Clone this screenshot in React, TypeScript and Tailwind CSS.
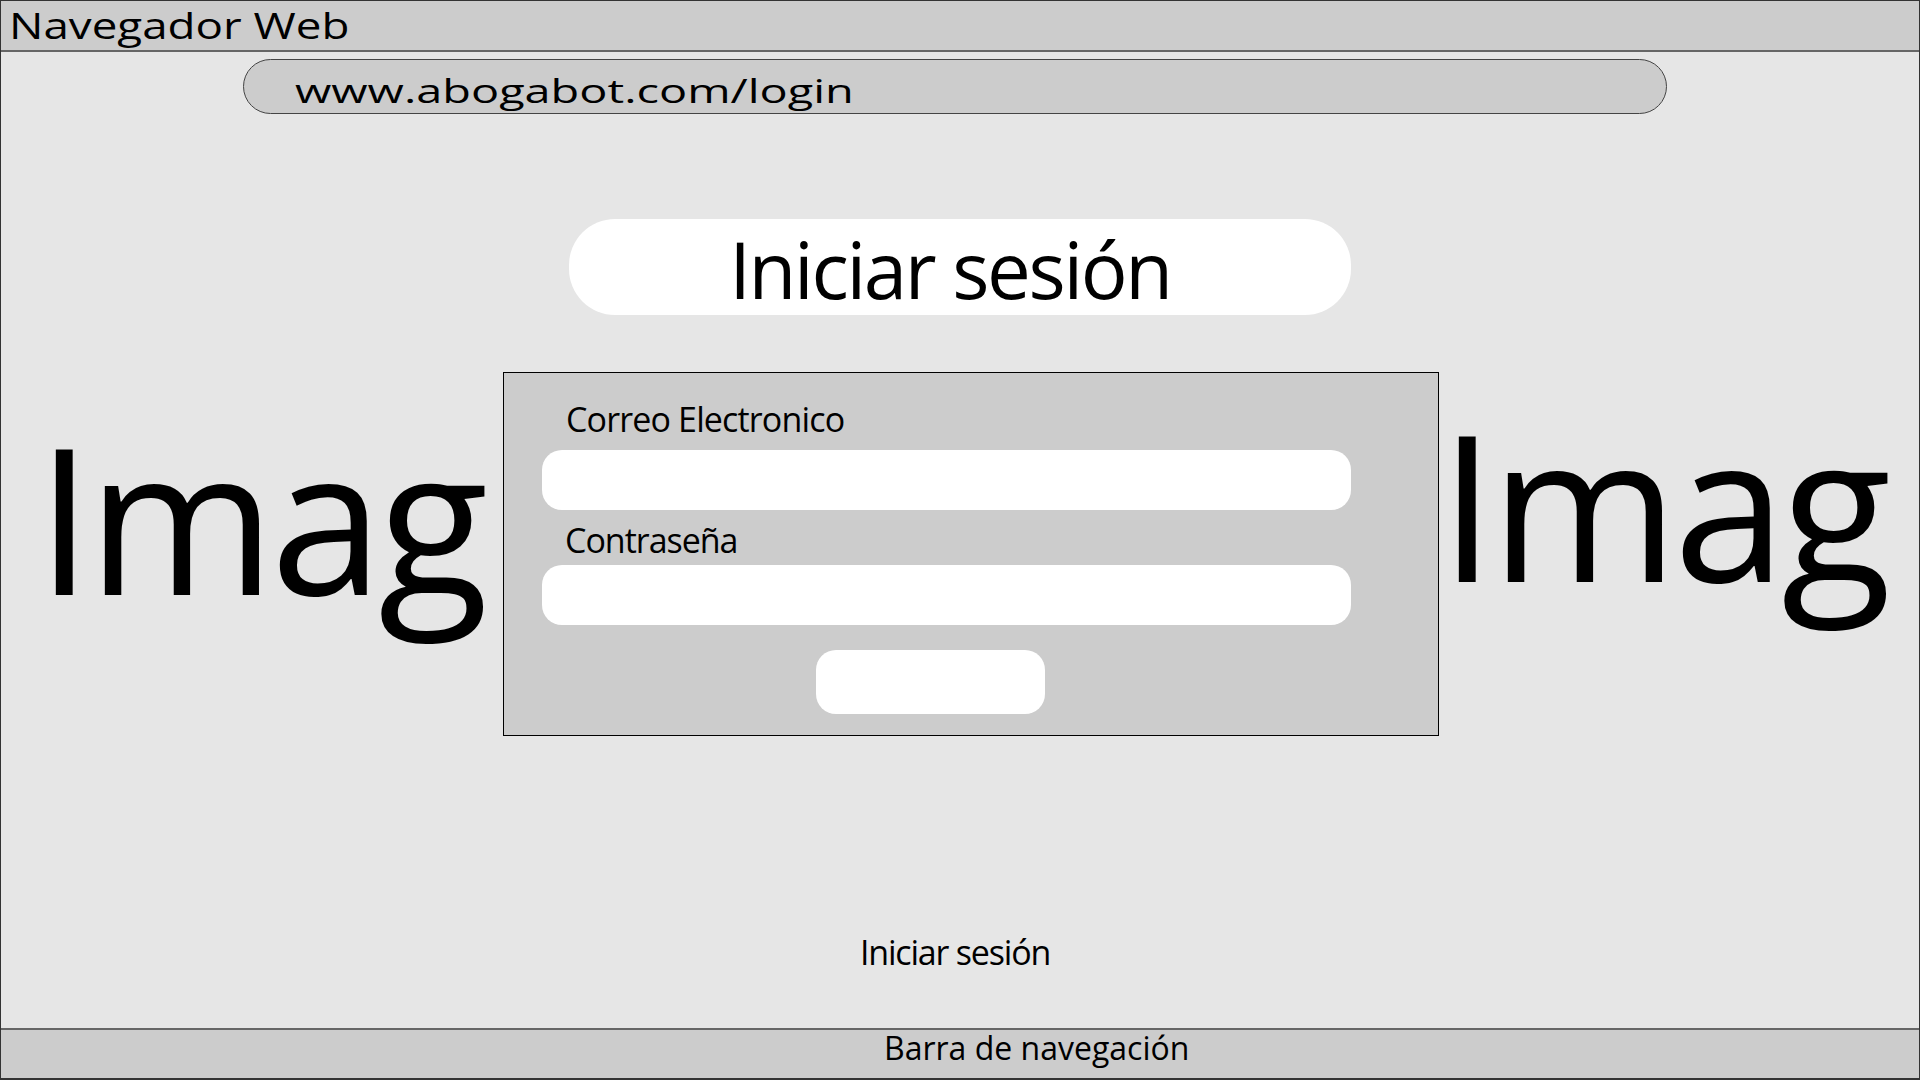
export default function App() {
  return (
    <div className="flex h-[1080px] w-[1920px] flex-col overflow-hidden border border-[#333] bg-[#e6e6e6] font-['Open_Sans',sans-serif] text-black">
      {/* Browser title bar */}
      <div className="h-[51px] shrink-0 border-b-2 border-[#666] bg-[#cccccc] pl-[8px]">
        <div className="origin-left scale-x-[1.27] text-[36px] leading-[49px]">Navegador Web</div>
      </div>

      <div className="flex flex-1 flex-col">
        {/* Address bar */}
        <div className="ml-[242px] mt-[7px] h-[55px] w-[1424px] rounded-full border border-[#444] bg-[#cccccc] pl-[51px] pt-[8px]">
          <div className="origin-left scale-x-[1.42] text-[33px] leading-[45px]">www.abogabot.com/login</div>
        </div>

        {/* Title */}
        <div className="ml-[568px] mt-[105px] flex h-[96px] w-[782px] items-center justify-center rounded-[46px] bg-white pr-[20px] pt-[4px]">
          <span className="text-[78px] leading-[78px] tracking-[-0.03em]">Iniciar sesión</span>
        </div>

        {/* Images + form */}
        <div className="mt-[57px] flex items-start">
          <div className="w-[502px] pl-[35px] pt-[43px] text-[203px] leading-[203px] tracking-[-0.025em]">Imag</div>

          <div className="flex w-[936px] flex-col border border-black bg-[#cccccc] pb-[21px] pt-[29px]">
            <div className="pl-[62px] text-[34px] leading-[34px] tracking-[-0.025em]">Correo Electronico</div>
            <div className="ml-[38px] mt-[14px] h-[60px] w-[809px] rounded-[20px] bg-white" />
            <div className="mt-[13px] pl-[61px] text-[34px] leading-[34px] tracking-[-0.03em]">Contraseña</div>
            <div className="ml-[38px] mt-[8px] h-[60px] w-[809px] rounded-[20px] bg-white" />
            <div className="ml-[312px] mt-[25px] h-[64px] w-[229px] rounded-[20px] bg-white" />
          </div>

          <div className="pt-[30px] text-[203px] leading-[203px] tracking-[-0.025em]">Imag</div>
        </div>

        <div className="mt-[199px] flex justify-center pr-[10px]">
          <span className="text-[34px] leading-[34px] tracking-[-0.035em]">Iniciar sesión</span>
        </div>
      </div>

      {/* Bottom navigation bar */}
      <div className="h-[51px] shrink-0 border-b border-t-2 border-b-[#333] border-t-[#666] bg-[#cccccc] pl-[883px]">
        <span className="text-[32px] leading-[36px]">Barra de navegación</span>
      </div>
    </div>
  )
}
